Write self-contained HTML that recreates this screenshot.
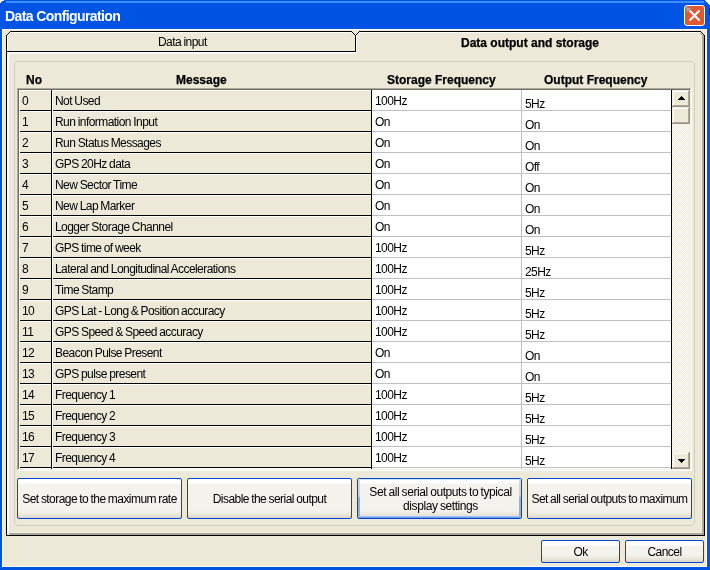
<!DOCTYPE html>
<html><head><meta charset="utf-8"><style>
html,body{margin:0;padding:0;}
body{width:710px;height:570px;position:relative;overflow:hidden;background:#fff;font-family:"Liberation Sans",sans-serif;}
div{position:absolute;box-sizing:content-box;}
.t{font-size:12px;line-height:14px;letter-spacing:-0.55px;word-spacing:-0.5px;white-space:nowrap;color:#000;}
.b12{font-size:12px;font-weight:bold;line-height:14px;letter-spacing:0px;white-space:nowrap;color:#000;-webkit-text-stroke:0.25px #000;}
.b13{font-size:13px;font-weight:bold;line-height:15px;white-space:nowrap;}
.bt{display:flex;align-items:center;justify-content:center;text-align:center;}
</style></head><body>
<div id="root" style="left:0;top:0;width:710px;height:570px;overflow:hidden;will-change:transform">
<div style="left:0px;top:0px;width:710px;height:570px;background:#0054E3;"></div>
<div style="left:0px;top:0px;width:4px;height:1px;background:#fff;"></div>
<div style="left:0px;top:1px;width:2px;height:1px;background:#fff;"></div>
<div style="left:0px;top:2px;width:1px;height:1px;background:#fff;"></div>
<div style="left:705px;top:0px;width:5px;height:1px;background:#fff;"></div>
<div style="left:706px;top:1px;width:4px;height:1px;background:#fff;"></div>
<div style="left:707px;top:2px;width:3px;height:1px;background:#fff;"></div>
<div style="left:708px;top:3px;width:2px;height:1px;background:#fff;"></div>
<div style="left:709px;top:4px;width:1px;height:1px;background:#fff;"></div>
<div style="left:709px;top:8px;width:1px;height:7px;background:#000;"></div>
<div style="left:6px;top:1px;width:698px;height:2px;background:#3D8EFF;"></div>
<div style="left:5px;top:8px;color:#fff;font-size:14px;font-weight:bold;line-height:16px;white-space:nowrap;letter-spacing:-0.6px">Data Configuration</div>
<div style="left:684px;top:5px;width:19px;height:19px;border:1px solid #fff;border-radius:3px;background:#E0582F"></div>
<svg style="position:absolute;left:684px;top:5px" width="21" height="21"><path d="M5.5 5.5 L15.5 15.5 M15.5 5.5 L5.5 15.5" stroke="#fff" stroke-width="2.2" fill="none"/><path d="M2 2 L7 3 L3 7 Z" fill="#A8A8A8"/></svg>
<div style="left:2px;top:29px;width:705px;height:538px;background:#FFFBF0;"></div>
<div style="left:3px;top:30px;width:703px;height:536px;background:#ECE9D8;"></div>
<div style="left:6px;top:35px;width:699px;height:501px;background:#000;"></div>
<div style="left:7px;top:35px;width:697px;height:500px;background:#fff;"></div>
<div style="left:8px;top:36px;width:696px;height:499px;background:#F8F7F1;"></div>
<div style="left:8px;top:36px;width:696px;height:499px;background:#ACA899;"></div>
<div style="left:8px;top:36px;width:695px;height:498px;background:#ACA899;"></div>
<div style="left:8px;top:36px;width:694px;height:497px;background:#F1EFE2;"></div>
<div style="left:9px;top:36px;width:692px;height:496px;background:#ECE9D8;"></div>
<div style="left:7px;top:35px;width:2px;height:500px;background:#fff;"></div>
<div style="left:7px;top:32px;width:348px;height:19px;background:#ECE9D8;"></div>
<div style="left:10px;top:31px;width:342px;height:1px;background:#000;"></div>
<div style="left:9px;top:32px;width:1px;height:1px;background:#000;"></div>
<div style="left:8px;top:33px;width:1px;height:1px;background:#000;"></div>
<div style="left:7px;top:34px;width:1px;height:1px;background:#000;"></div>
<div style="left:352px;top:32px;width:1px;height:1px;background:#000;"></div>
<div style="left:353px;top:33px;width:1px;height:1px;background:#000;"></div>
<div style="left:354px;top:34px;width:1px;height:1px;background:#000;"></div>
<div style="left:10px;top:32px;width:341px;height:1px;background:#fff;"></div>
<div style="left:9px;top:33px;width:1px;height:1px;background:#fff;"></div>
<div style="left:8px;top:34px;width:1px;height:1px;background:#fff;"></div>
<div style="left:6px;top:35px;width:1px;height:17px;background:#000;"></div>
<div style="left:7px;top:35px;width:1px;height:18px;background:#fff;"></div>
<div style="left:355px;top:35px;width:1px;height:17px;background:#000;"></div>
<div style="left:6px;top:51px;width:350px;height:1px;background:#000;"></div>
<div style="left:7px;top:52px;width:350px;height:1px;background:#fff;"></div>
<div style="left:8px;top:53px;width:349px;height:1px;background:#F8F7F1;"></div>
<div style="left:357px;top:32px;width:346px;height:21px;background:#ECE9D8;"></div>
<div style="left:359px;top:31px;width:342px;height:1px;background:#000;"></div>
<div style="left:358px;top:32px;width:1px;height:1px;background:#000;"></div>
<div style="left:357px;top:33px;width:1px;height:1px;background:#000;"></div>
<div style="left:356px;top:34px;width:1px;height:1px;background:#000;"></div>
<div style="left:701px;top:32px;width:1px;height:1px;background:#000;"></div>
<div style="left:702px;top:33px;width:1px;height:1px;background:#000;"></div>
<div style="left:703px;top:34px;width:1px;height:1px;background:#000;"></div>
<div style="left:359px;top:32px;width:341px;height:1px;background:#fff;"></div>
<div style="left:358px;top:33px;width:1px;height:1px;background:#fff;"></div>
<div style="left:357px;top:34px;width:1px;height:1px;background:#fff;"></div>
<div style="left:356px;top:35px;width:1px;height:18px;background:#fff;"></div>
<div style="left:704px;top:35px;width:1px;height:26px;background:#000;"></div>
<div style="left:700px;top:33px;width:1px;height:1px;background:#ACA899;"></div>
<div style="left:701px;top:34px;width:1px;height:1px;background:#ACA899;"></div>
<div style="left:702px;top:35px;width:1px;height:1px;background:#ACA899;"></div>
<div style="left:703px;top:35px;width:1px;height:26px;background:#ACA899;"></div>
<div style="left:702px;top:36px;width:1px;height:25px;background:#ACA899;"></div>
<div style="left:701px;top:36px;width:1px;height:25px;background:#F1EFE2;"></div>
<div class="t" style="left:158px;top:35px;">Data input</div>
<div class="b12" style="left:461px;top:36px;">Data output and storage</div>
<div style="left:16px;top:61px;width:677px;height:1px;background:#D0D0BF;"></div>
<div style="left:17px;top:525px;width:675px;height:1px;background:#D0D0BF;"></div>
<div style="left:14px;top:63px;width:1px;height:460px;background:#D0D0BF;"></div>
<div style="left:694px;top:63px;width:1px;height:460px;background:#D0D0BF;"></div>
<div style="left:15px;top:62px;width:1px;height:1px;background:#D0D0BF;"></div>
<div style="left:693px;top:62px;width:1px;height:1px;background:#D0D0BF;"></div>
<div style="left:15px;top:523px;width:1px;height:1px;background:#D0D0BF;"></div>
<div style="left:16px;top:524px;width:1px;height:1px;background:#D0D0BF;"></div>
<div style="left:693px;top:523px;width:1px;height:1px;background:#D0D0BF;"></div>
<div style="left:692px;top:524px;width:1px;height:1px;background:#D0D0BF;"></div>
<div class="b12" style="left:26px;top:73px;">No</div>
<div class="b12" style="left:176px;top:73px;">Message</div>
<div class="b12" style="left:387px;top:73px;">Storage Frequency</div>
<div class="b12" style="left:544px;top:73px;">Output Frequency</div>
<div style="left:17px;top:88px;width:675px;height:383px;background:#fff;"></div>
<div style="left:17px;top:88px;width:674px;height:382px;background:#F1EFE2;"></div>
<div style="left:17px;top:88px;width:674px;height:1px;background:#ACA899;"></div>
<div style="left:17px;top:88px;width:1px;height:382px;background:#ACA899;"></div>
<div style="left:18px;top:89px;width:672px;height:1px;background:#716F64;"></div>
<div style="left:18px;top:89px;width:1px;height:380px;background:#716F64;"></div>
<div style="left:19px;top:90px;width:671px;height:379px;overflow:hidden;background:#fff">
<div style="left:0;top:0;width:353px;height:379px;background:#ECE9D8"></div>
<div style="left:0;top:0;width:1px;height:379px;background:#fff"></div>
<div style="left:33px;top:0;width:1px;height:379px;background:#fff"></div>
<div style="left:32px;top:0;width:1px;height:379px;background:#000"></div>
<div style="left:352px;top:0;width:1px;height:379px;background:#000"></div>
<div style="left:1px;top:20px;width:31px;height:1px;background:#000"></div>
<div style="left:0;top:0px;width:32px;height:1px;background:#fff"></div>
<div style="left:34px;top:20px;width:318px;height:1px;background:#000"></div>
<div style="left:33px;top:0px;width:319px;height:1px;background:#fff"></div>
<div style="left:353px;top:20px;width:300px;height:1px;background:#C0C0C0"></div>
<div class="t" style="left:3px;top:4px">0</div>
<div class="t" style="left:36px;top:4px">Not Used</div>
<div class="t" style="left:356px;top:4px">100Hz</div>
<div class="t" style="left:506px;top:7px">5Hz</div>
<div style="left:1px;top:41px;width:31px;height:1px;background:#000"></div>
<div style="left:0;top:21px;width:32px;height:1px;background:#fff"></div>
<div style="left:34px;top:41px;width:318px;height:1px;background:#000"></div>
<div style="left:33px;top:21px;width:319px;height:1px;background:#fff"></div>
<div style="left:353px;top:41px;width:300px;height:1px;background:#C0C0C0"></div>
<div class="t" style="left:3px;top:25px">1</div>
<div class="t" style="left:36px;top:25px">Run information Input</div>
<div class="t" style="left:356px;top:25px">On</div>
<div class="t" style="left:506px;top:28px">On</div>
<div style="left:1px;top:62px;width:31px;height:1px;background:#000"></div>
<div style="left:0;top:42px;width:32px;height:1px;background:#fff"></div>
<div style="left:34px;top:62px;width:318px;height:1px;background:#000"></div>
<div style="left:33px;top:42px;width:319px;height:1px;background:#fff"></div>
<div style="left:353px;top:62px;width:300px;height:1px;background:#C0C0C0"></div>
<div class="t" style="left:3px;top:46px">2</div>
<div class="t" style="left:36px;top:46px">Run Status Messages</div>
<div class="t" style="left:356px;top:46px">On</div>
<div class="t" style="left:506px;top:49px">On</div>
<div style="left:1px;top:83px;width:31px;height:1px;background:#000"></div>
<div style="left:0;top:63px;width:32px;height:1px;background:#fff"></div>
<div style="left:34px;top:83px;width:318px;height:1px;background:#000"></div>
<div style="left:33px;top:63px;width:319px;height:1px;background:#fff"></div>
<div style="left:353px;top:83px;width:300px;height:1px;background:#C0C0C0"></div>
<div class="t" style="left:3px;top:67px">3</div>
<div class="t" style="left:36px;top:67px">GPS 20Hz data</div>
<div class="t" style="left:356px;top:67px">On</div>
<div class="t" style="left:506px;top:70px">Off</div>
<div style="left:1px;top:104px;width:31px;height:1px;background:#000"></div>
<div style="left:0;top:84px;width:32px;height:1px;background:#fff"></div>
<div style="left:34px;top:104px;width:318px;height:1px;background:#000"></div>
<div style="left:33px;top:84px;width:319px;height:1px;background:#fff"></div>
<div style="left:353px;top:104px;width:300px;height:1px;background:#C0C0C0"></div>
<div class="t" style="left:3px;top:88px">4</div>
<div class="t" style="left:36px;top:88px">New Sector Time</div>
<div class="t" style="left:356px;top:88px">On</div>
<div class="t" style="left:506px;top:91px">On</div>
<div style="left:1px;top:125px;width:31px;height:1px;background:#000"></div>
<div style="left:0;top:105px;width:32px;height:1px;background:#fff"></div>
<div style="left:34px;top:125px;width:318px;height:1px;background:#000"></div>
<div style="left:33px;top:105px;width:319px;height:1px;background:#fff"></div>
<div style="left:353px;top:125px;width:300px;height:1px;background:#C0C0C0"></div>
<div class="t" style="left:3px;top:109px">5</div>
<div class="t" style="left:36px;top:109px">New Lap Marker</div>
<div class="t" style="left:356px;top:109px">On</div>
<div class="t" style="left:506px;top:112px">On</div>
<div style="left:1px;top:146px;width:31px;height:1px;background:#000"></div>
<div style="left:0;top:126px;width:32px;height:1px;background:#fff"></div>
<div style="left:34px;top:146px;width:318px;height:1px;background:#000"></div>
<div style="left:33px;top:126px;width:319px;height:1px;background:#fff"></div>
<div style="left:353px;top:146px;width:300px;height:1px;background:#C0C0C0"></div>
<div class="t" style="left:3px;top:130px">6</div>
<div class="t" style="left:36px;top:130px">Logger Storage Channel</div>
<div class="t" style="left:356px;top:130px">On</div>
<div class="t" style="left:506px;top:133px">On</div>
<div style="left:1px;top:167px;width:31px;height:1px;background:#000"></div>
<div style="left:0;top:147px;width:32px;height:1px;background:#fff"></div>
<div style="left:34px;top:167px;width:318px;height:1px;background:#000"></div>
<div style="left:33px;top:147px;width:319px;height:1px;background:#fff"></div>
<div style="left:353px;top:167px;width:300px;height:1px;background:#C0C0C0"></div>
<div class="t" style="left:3px;top:151px">7</div>
<div class="t" style="left:36px;top:151px">GPS time of week</div>
<div class="t" style="left:356px;top:151px">100Hz</div>
<div class="t" style="left:506px;top:154px">5Hz</div>
<div style="left:1px;top:188px;width:31px;height:1px;background:#000"></div>
<div style="left:0;top:168px;width:32px;height:1px;background:#fff"></div>
<div style="left:34px;top:188px;width:318px;height:1px;background:#000"></div>
<div style="left:33px;top:168px;width:319px;height:1px;background:#fff"></div>
<div style="left:353px;top:188px;width:300px;height:1px;background:#C0C0C0"></div>
<div class="t" style="left:3px;top:172px">8</div>
<div class="t" style="left:36px;top:172px">Lateral and Longitudinal Accelerations</div>
<div class="t" style="left:356px;top:172px">100Hz</div>
<div class="t" style="left:506px;top:175px">25Hz</div>
<div style="left:1px;top:209px;width:31px;height:1px;background:#000"></div>
<div style="left:0;top:189px;width:32px;height:1px;background:#fff"></div>
<div style="left:34px;top:209px;width:318px;height:1px;background:#000"></div>
<div style="left:33px;top:189px;width:319px;height:1px;background:#fff"></div>
<div style="left:353px;top:209px;width:300px;height:1px;background:#C0C0C0"></div>
<div class="t" style="left:3px;top:193px">9</div>
<div class="t" style="left:36px;top:193px">Time Stamp</div>
<div class="t" style="left:356px;top:193px">100Hz</div>
<div class="t" style="left:506px;top:196px">5Hz</div>
<div style="left:1px;top:230px;width:31px;height:1px;background:#000"></div>
<div style="left:0;top:210px;width:32px;height:1px;background:#fff"></div>
<div style="left:34px;top:230px;width:318px;height:1px;background:#000"></div>
<div style="left:33px;top:210px;width:319px;height:1px;background:#fff"></div>
<div style="left:353px;top:230px;width:300px;height:1px;background:#C0C0C0"></div>
<div class="t" style="left:3px;top:214px">10</div>
<div class="t" style="left:36px;top:214px">GPS Lat - Long &amp; Position accuracy</div>
<div class="t" style="left:356px;top:214px">100Hz</div>
<div class="t" style="left:506px;top:217px">5Hz</div>
<div style="left:1px;top:251px;width:31px;height:1px;background:#000"></div>
<div style="left:0;top:231px;width:32px;height:1px;background:#fff"></div>
<div style="left:34px;top:251px;width:318px;height:1px;background:#000"></div>
<div style="left:33px;top:231px;width:319px;height:1px;background:#fff"></div>
<div style="left:353px;top:251px;width:300px;height:1px;background:#C0C0C0"></div>
<div class="t" style="left:3px;top:235px">11</div>
<div class="t" style="left:36px;top:235px">GPS Speed &amp; Speed accuracy</div>
<div class="t" style="left:356px;top:235px">100Hz</div>
<div class="t" style="left:506px;top:238px">5Hz</div>
<div style="left:1px;top:272px;width:31px;height:1px;background:#000"></div>
<div style="left:0;top:252px;width:32px;height:1px;background:#fff"></div>
<div style="left:34px;top:272px;width:318px;height:1px;background:#000"></div>
<div style="left:33px;top:252px;width:319px;height:1px;background:#fff"></div>
<div style="left:353px;top:272px;width:300px;height:1px;background:#C0C0C0"></div>
<div class="t" style="left:3px;top:256px">12</div>
<div class="t" style="left:36px;top:256px">Beacon Pulse Present</div>
<div class="t" style="left:356px;top:256px">On</div>
<div class="t" style="left:506px;top:259px">On</div>
<div style="left:1px;top:293px;width:31px;height:1px;background:#000"></div>
<div style="left:0;top:273px;width:32px;height:1px;background:#fff"></div>
<div style="left:34px;top:293px;width:318px;height:1px;background:#000"></div>
<div style="left:33px;top:273px;width:319px;height:1px;background:#fff"></div>
<div style="left:353px;top:293px;width:300px;height:1px;background:#C0C0C0"></div>
<div class="t" style="left:3px;top:277px">13</div>
<div class="t" style="left:36px;top:277px">GPS pulse present</div>
<div class="t" style="left:356px;top:277px">On</div>
<div class="t" style="left:506px;top:280px">On</div>
<div style="left:1px;top:314px;width:31px;height:1px;background:#000"></div>
<div style="left:0;top:294px;width:32px;height:1px;background:#fff"></div>
<div style="left:34px;top:314px;width:318px;height:1px;background:#000"></div>
<div style="left:33px;top:294px;width:319px;height:1px;background:#fff"></div>
<div style="left:353px;top:314px;width:300px;height:1px;background:#C0C0C0"></div>
<div class="t" style="left:3px;top:298px">14</div>
<div class="t" style="left:36px;top:298px">Frequency 1</div>
<div class="t" style="left:356px;top:298px">100Hz</div>
<div class="t" style="left:506px;top:301px">5Hz</div>
<div style="left:1px;top:335px;width:31px;height:1px;background:#000"></div>
<div style="left:0;top:315px;width:32px;height:1px;background:#fff"></div>
<div style="left:34px;top:335px;width:318px;height:1px;background:#000"></div>
<div style="left:33px;top:315px;width:319px;height:1px;background:#fff"></div>
<div style="left:353px;top:335px;width:300px;height:1px;background:#C0C0C0"></div>
<div class="t" style="left:3px;top:319px">15</div>
<div class="t" style="left:36px;top:319px">Frequency 2</div>
<div class="t" style="left:356px;top:319px">100Hz</div>
<div class="t" style="left:506px;top:322px">5Hz</div>
<div style="left:1px;top:356px;width:31px;height:1px;background:#000"></div>
<div style="left:0;top:336px;width:32px;height:1px;background:#fff"></div>
<div style="left:34px;top:356px;width:318px;height:1px;background:#000"></div>
<div style="left:33px;top:336px;width:319px;height:1px;background:#fff"></div>
<div style="left:353px;top:356px;width:300px;height:1px;background:#C0C0C0"></div>
<div class="t" style="left:3px;top:340px">16</div>
<div class="t" style="left:36px;top:340px">Frequency 3</div>
<div class="t" style="left:356px;top:340px">100Hz</div>
<div class="t" style="left:506px;top:343px">5Hz</div>
<div style="left:1px;top:377px;width:31px;height:1px;background:#000"></div>
<div style="left:0;top:357px;width:32px;height:1px;background:#fff"></div>
<div style="left:34px;top:377px;width:318px;height:1px;background:#000"></div>
<div style="left:33px;top:357px;width:319px;height:1px;background:#fff"></div>
<div style="left:353px;top:377px;width:300px;height:1px;background:#C0C0C0"></div>
<div class="t" style="left:3px;top:361px">17</div>
<div class="t" style="left:36px;top:361px">Frequency 4</div>
<div class="t" style="left:356px;top:361px">100Hz</div>
<div class="t" style="left:506px;top:364px">5Hz</div>
<div style="left:1px;top:398px;width:31px;height:1px;background:#000"></div>
<div style="left:0;top:378px;width:32px;height:1px;background:#fff"></div>
<div style="left:34px;top:398px;width:318px;height:1px;background:#000"></div>
<div style="left:33px;top:378px;width:319px;height:1px;background:#fff"></div>
<div style="left:353px;top:398px;width:300px;height:1px;background:#C0C0C0"></div>
<div style="left:502px;top:0;width:1px;height:379px;background:#C0C0C0"></div>
<div style="left:652px;top:0;width:1px;height:379px;background:#000"></div>
<div style="left:653px;top:0;width:18px;height:379px;background-color:#fff;background-image:linear-gradient(45deg,#ECE9D8 25%,transparent 25%,transparent 75%,#ECE9D8 75%),linear-gradient(45deg,#ECE9D8 25%,transparent 25%,transparent 75%,#ECE9D8 75%);background-size:2px 2px;background-position:0 0,1px 1px"></div>
<div style="left:653px;top:0px;width:18px;height:17px;background:#9A978A"></div>
<div style="left:653px;top:0px;width:17px;height:16px;background:#F1EFE2"></div>
<div style="left:654px;top:1px;width:16px;height:15px;background:#ACA899"></div>
<div style="left:654px;top:1px;width:15px;height:14px;background:#fff"></div>
<div style="left:655px;top:2px;width:14px;height:13px;background:#ECE9D8"></div>
<div style="left:653px;top:17px;width:18px;height:17px;background:#9A978A"></div>
<div style="left:653px;top:17px;width:17px;height:16px;background:#F1EFE2"></div>
<div style="left:654px;top:18px;width:16px;height:15px;background:#ACA899"></div>
<div style="left:654px;top:18px;width:15px;height:14px;background:#fff"></div>
<div style="left:655px;top:19px;width:14px;height:13px;background:#ECE9D8"></div>
<div style="left:653px;top:362px;width:18px;height:17px;background:#9A978A"></div>
<div style="left:653px;top:362px;width:17px;height:16px;background:#F1EFE2"></div>
<div style="left:654px;top:363px;width:16px;height:15px;background:#ACA899"></div>
<div style="left:654px;top:363px;width:15px;height:14px;background:#fff"></div>
<div style="left:655px;top:364px;width:14px;height:13px;background:#ECE9D8"></div>
<svg style="position:absolute;left:653px;top:0" width="18" height="379"><path d="M9 6 L10 6 L10 7 L11 7 L11 8 L12 8 L12 9 L13 9 L13 10 L6 10 L6 9 L7 9 L7 8 L8 8 L8 7 L9 7 Z" fill="#000"/><path d="M6 369 L13 369 L13 370 L12 370 L12 371 L11 371 L11 372 L10 372 L10 373 L9 373 L9 372 L8 372 L8 371 L7 371 L7 370 L6 370 Z" fill="#000"/></svg>
</div>
<div style="left:17px;top:478px;width:163px;height:39px;border:1px solid #0046D5;border-radius:2px;background:linear-gradient(#FFFFFF 0px,#FFFFFF 4px,#F4F3EE 5px,#F3F2EC calc(100% - 7px),#E8E5DA calc(100% - 3px),#DCD5C5 100%);"></div>
<div class="t bt" style="left:17px;top:478px;width:165px;height:41px;">Set storage to the maximum rate</div>
<div style="left:187px;top:478px;width:163px;height:39px;border:1px solid #0046D5;border-radius:2px;background:linear-gradient(#FFFFFF 0px,#FFFFFF 4px,#F4F3EE 5px,#F3F2EC calc(100% - 7px),#E8E5DA calc(100% - 3px),#DCD5C5 100%);"></div>
<div class="t bt" style="left:187px;top:478px;width:165px;height:41px;">Disable the serial output</div>
<div style="left:357px;top:478px;width:163px;height:39px;border:1px solid #0046D5;border-radius:2px;background:linear-gradient(#FFFFFF 0px,#FFFFFF 4px,#F4F3EE 5px,#F3F2EC calc(100% - 7px),#E8E5DA calc(100% - 3px),#DCD5C5 100%);"></div>
<div style="left:358px;top:479px;width:163px;height:1px;background:#CEE7FF;"></div>
<div style="left:358px;top:517px;width:163px;height:1px;background:#6E9BEA;"></div>
<div style="left:358px;top:516px;width:163px;height:1px;background:#A6C1F0;"></div>
<div style="left:358px;top:480px;width:2px;height:36px;background:linear-gradient(#C9DBFA,#BCD4F6 45%,#8DB0EA 50%,#8DB0EA)"></div>
<div style="left:519px;top:480px;width:2px;height:36px;background:linear-gradient(#C9DBFA,#BCD4F6 45%,#8DB0EA 50%,#8DB0EA)"></div>
<div class="t bt" style="left:357px;top:478px;width:165px;height:41px;letter-spacing:-0.42px;padding-left:2px;width:163px">Set all serial outputs to typical<br>display settings</div>
<div style="left:527px;top:478px;width:163px;height:39px;border:1px solid #0046D5;border-radius:2px;background:linear-gradient(#FFFFFF 0px,#FFFFFF 4px,#F4F3EE 5px,#F3F2EC calc(100% - 7px),#E8E5DA calc(100% - 3px),#DCD5C5 100%);"></div>
<div class="t bt" style="left:527px;top:478px;width:165px;height:41px;">Set all serial outputs to maximum</div>
<div style="left:541px;top:540px;width:77px;height:21px;border:1px solid #0046D5;border-radius:2px;background:linear-gradient(#FFFFFF 0px,#FFFFFF 4px,#F4F3EE 5px,#F3F2EC calc(100% - 7px),#E8E5DA calc(100% - 3px),#DCD5C5 100%);"></div>
<div class="t bt" style="left:541px;top:540px;width:79px;height:23px;">Ok</div>
<div style="left:625px;top:540px;width:77px;height:21px;border:1px solid #0046D5;border-radius:2px;background:linear-gradient(#FFFFFF 0px,#FFFFFF 4px,#F4F3EE 5px,#F3F2EC calc(100% - 7px),#E8E5DA calc(100% - 3px),#DCD5C5 100%);"></div>
<div class="t bt" style="left:625px;top:540px;width:79px;height:23px;">Cancel</div>
</div></body></html>
